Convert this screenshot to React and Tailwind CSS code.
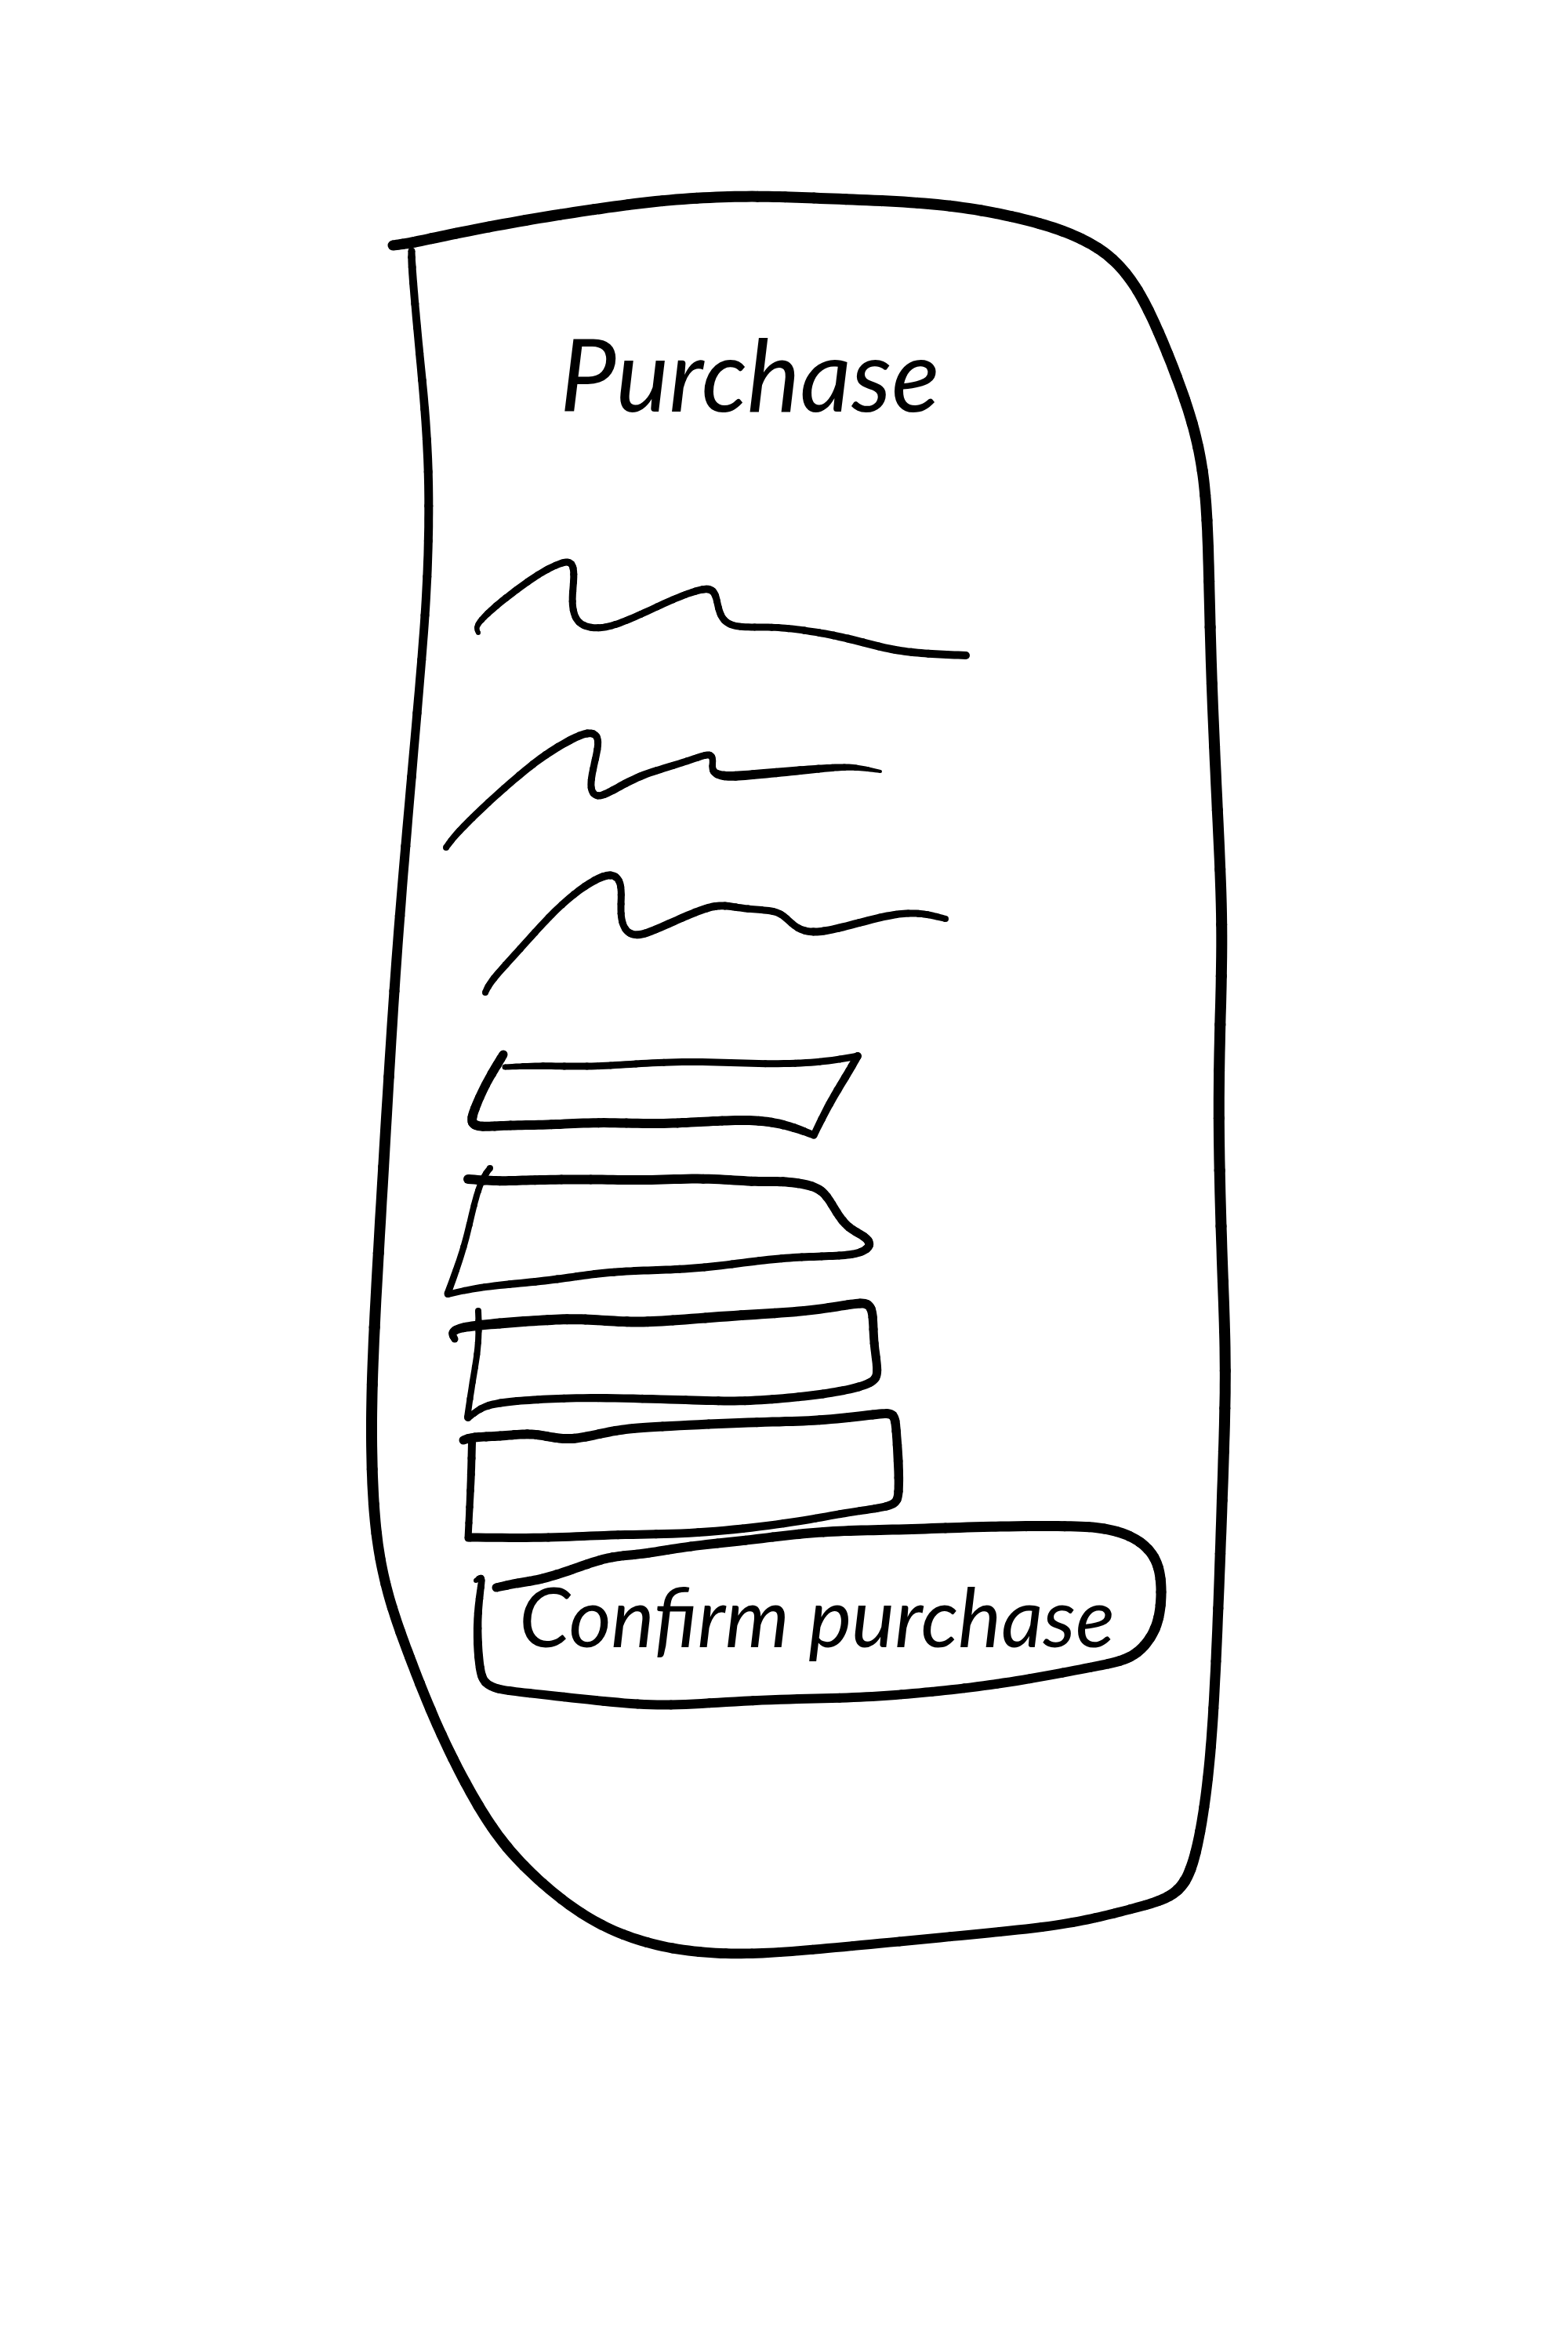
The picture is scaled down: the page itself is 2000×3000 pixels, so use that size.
import React from "react";

// Every pen stroke is a list of [x, y, width] points in sheet coordinates.
const FRAME = [
  [
    [501, 313, 13], [525, 310, 14], [573, 299, 14], [673, 280, 14], [757, 267, 14], [845, 255, 14],
    [933, 250, 14], [1000, 251, 14], [1075, 254, 14], [1174, 258, 14], [1251, 267, 14], [1331, 285, 14],
    [1381, 304, 14], [1420, 328, 14], [1452, 368, 14], [1478, 423, 14], [1501, 480, 14], [1522, 540, 14],
    [1535, 600, 14], [1540, 663, 14], [1542, 730, 14], [1545, 866, 14], [1553, 1038, 14], [1560, 1182, 14],
    [1556, 1310, 14], [1554, 1421, 14], [1557, 1564, 14], [1563, 1708, 14], [1563, 1790, 14], [1559, 1910, 14],
    [1554, 2053, 13], [1548, 2187, 13], [1541, 2271, 13], [1531, 2340, 13], [1519, 2388, 14], [1504, 2412, 14],
    [1480, 2425, 13], [1443, 2435, 12], [1400, 2446, 12], [1340, 2458, 12], [1213, 2470, 12], [1080, 2483, 12],
    [990, 2491, 12], [927, 2493, 13], [857, 2487, 13], [793, 2469, 13], [741, 2442, 13], [691, 2403, 13],
    [645, 2357, 14], [610, 2305, 14], [577, 2243, 13], [549, 2182, 13], [522, 2113, 13], [499, 2050, 13],
    [484, 1990, 13], [476, 1923, 14], [473, 1827, 14], [476, 1710, 14], [489, 1492, 14], [503, 1253, 13],
    [517, 1081, 12], [533, 899, 11], [543, 780, 11], [547, 690, 11], [547, 600, 11], [542, 520, 11],
    [535, 450, 10], [529, 385, 10], [525, 335, 10], [525, 320, 9],
  ],
];

const LINE_ONE = [
  [
    [610, 807, 6], [607, 801, 6], [612, 792, 8], [632, 773, 9], [659, 752, 9], [687, 732, 9], [710, 720, 9],
    [726, 715, 9], [732, 723, 9], [732, 741, 9], [729, 768, 9], [733, 789, 9], [744, 799, 9], [763, 802, 9],
    [783, 798, 9], [815, 785, 9], [861, 763, 9], [889, 753, 9], [905, 750, 10], [913, 757, 9], [916, 776, 9],
    [922, 792, 9], [939, 801, 9], [985, 799, 9], [1027, 804, 9], [1063, 810, 10], [1100, 819, 10],
    [1141, 830, 10], [1183, 834, 10], [1232, 836, 10],
  ],
];

const LINE_TWO = [
  [
    [569, 1081, 8], [581, 1064, 9], [623, 1023, 9], [664, 987, 9], [696, 962, 10], [728, 943, 10],
    [751, 933, 10], [763, 938, 9], [763, 954, 9], [756, 982, 9], [752, 1007, 9], [761, 1018, 9],
    [779, 1010, 10], [815, 989, 10], [861, 976, 9], [893, 965, 9], [907, 961, 9], [910, 970, 8],
    [907, 984, 9], [921, 991, 12], [953, 989, 12], [1027, 982, 11], [1063, 979, 9], [1091, 978, 8], [1123, 984, 4],
  ],
];

const LINE_THREE = [
  [
    [619, 1266, 8], [625, 1252, 9], [664, 1210, 9], [701, 1168, 9], [733, 1139, 9], [760, 1121, 10],
    [780, 1114, 10], [791, 1122, 9], [793, 1140, 9], [791, 1166, 9], [796, 1187, 9], [811, 1195, 10],
    [834, 1187, 10], [871, 1170, 10], [903, 1157, 10], [923, 1154, 10], [953, 1160, 9], [990, 1161, 9],
    [1003, 1171, 9], [1017, 1185, 9], [1036, 1190, 10], [1064, 1186, 10], [1128, 1168, 10], [1160, 1164, 9],
    [1183, 1166, 9], [1206, 1172, 8],
  ],
];

const BOX_ONE = [
  [
    [642, 1345, 11], [636, 1355, 12], [619, 1383, 11], [604, 1417, 12], [600, 1433, 12], [612, 1438, 12],
    [648, 1435, 12], [703, 1435, 12], [760, 1431, 12], [838, 1434, 12], [891, 1431, 12], [952, 1428, 12],
    [985, 1431, 12], [1013, 1438, 11], [1038, 1448, 9],
  ],
  [[1038, 1448, 9], [1058, 1407, 10], [1079, 1373, 10], [1094, 1347, 10]],
  [
    [644, 1361, 7], [691, 1359, 9], [748, 1361, 9], [809, 1357, 9], [883, 1353, 9], [981, 1358, 9],
    [1050, 1355, 9], [1094, 1347, 9],
  ],
];

const BOX_TWO = [
  [
    [597, 1504, 12], [638, 1507, 12], [675, 1505, 12], [756, 1504, 12], [822, 1506, 12], [899, 1502, 12],
    [964, 1508, 12], [997, 1506, 12], [1040, 1512, 12], [1055, 1525, 11], [1067, 1547, 11], [1082, 1567, 11],
    [1104, 1577, 11], [1112, 1588, 11], [1100, 1598, 10], [1075, 1602, 10], [1022, 1603, 10], [973, 1607, 10],
    [895, 1618, 10], [838, 1620, 10], [781, 1622, 10], [736, 1628, 10], [687, 1635, 10], [613, 1641, 9], [571, 1651, 8],
  ],
  [[571, 1650, 9], [593, 1590, 8], [605, 1533, 8], [615, 1503, 8], [625, 1490, 8]],
];

const BOX_THREE = [
  [
    [580, 1708, 9], [575, 1700, 10], [585, 1693, 12], [634, 1688, 13], [703, 1683, 13], [744, 1682, 13],
    [801, 1687, 13], [850, 1685, 13], [948, 1677, 13], [1030, 1673, 12], [1087, 1663, 12], [1109, 1661, 12],
    [1114, 1677, 11], [1114, 1713, 11], [1121, 1752, 11], [1114, 1764, 11], [1079, 1774, 11], [1022, 1782, 11],
    [948, 1788, 11], [887, 1786, 11], [752, 1782, 10], [683, 1785, 10], [634, 1789, 10], [612, 1796, 9], [597, 1809, 8],
  ],
  [[596, 1808, 8], [603, 1760, 8], [609, 1727, 8], [611, 1697, 8], [610, 1672, 8]],
];

const BOX_FOUR = [
  [
    [591, 1837, 11], [601, 1833, 12], [638, 1832, 12], [675, 1828, 12], [697, 1832, 12], [720, 1836, 12],
    [744, 1834, 12], [785, 1824, 12], [826, 1820, 12], [981, 1813, 12], [1042, 1813, 12], [1124, 1803, 12],
    [1141, 1802, 12], [1143, 1822, 11], [1146, 1863, 12], [1147, 1908, 11], [1142, 1919, 11], [1120, 1924, 10],
    [1075, 1930, 10], [1009, 1943, 10], [887, 1957, 11], [785, 1957, 11], [703, 1962, 11], [599, 1961, 11],
  ],
  [[597, 1962, 9], [599, 1923, 9], [601, 1880, 10], [602, 1840, 10]],
];

const PILL = [
  [
    [633, 2025, 11], [660, 2019, 12], [690, 2015, 12], [730, 2002, 12], [768, 1988, 12], [795, 1984, 12],
    [823, 1982, 12], [878, 1972, 12], [952, 1965, 12], [1020, 1956, 12], [1080, 1952, 13], [1163, 1951, 13],
    [1247, 1947, 13], [1373, 1946, 13], [1409, 1949, 13], [1442, 1958, 13], [1466, 1975, 13], [1479, 1998, 13],
    [1482, 2030, 13], [1479, 2065, 13], [1468, 2090, 13], [1451, 2109, 13], [1430, 2119, 13], [1400, 2125, 12],
    [1313, 2142, 12], [1230, 2154, 12], [1147, 2162, 12], [1080, 2166, 12], [958, 2168, 12], [850, 2177, 12],
    [777, 2171, 12], [660, 2158, 11], [635, 2155, 11], [617, 2147, 11], [612, 2130, 11], [609, 2097, 11],
    [609, 2057, 10], [614, 2020, 9], [615, 2010, 8], [607, 2016, 6],
  ],
];

const STEPS = 10;

// Runs a B-spline along the points, varying the width like pen pressure.
function sample(points) {
  const n = points.length;
  const mirror = (a, b) => a.map((v, k) => 2 * v - b[k]);
  const all = [mirror(points[0], points[1]), ...points, mirror(points[n - 1], points[n - 2])];
  const result = [];
  for (let i = 0; i < n - 1; i++) {
    for (let s = 0; s < STEPS; s++) {
      const t = s / STEPS;
      const weights = [
        (1 - t) ** 3 / 6,
        (3 * t ** 3 - 6 * t ** 2 + 4) / 6,
        (-3 * t ** 3 + 3 * t ** 2 + 3 * t + 1) / 6,
        t ** 3 / 6,
      ];
      result.push([0, 1, 2].map((k) => weights.reduce((sum, w, j) => sum + w * all[i + j][k], 0)));
    }
  }
  result.push(points[n - 1]);
  return result;
}

function outline(samples) {
  const left = [];
  const right = [];
  samples.forEach(([x, y, w], i) => {
    const a = samples[Math.max(i - 1, 0)];
    const b = samples[Math.min(i + 1, samples.length - 1)];
    const d = Math.hypot(b[0] - a[0], b[1] - a[1]) || 1;
    const nx = ((a[1] - b[1]) / d) * (w / 2);
    const ny = ((b[0] - a[0]) / d) * (w / 2);
    left.push(`${(x + nx).toFixed(1)} ${(y + ny).toFixed(1)}`);
    right.unshift(`${(x - nx).toFixed(1)} ${(y - ny).toFixed(1)}`);
  });
  return `M${left.concat(right).join("L")}Z`;
}

function Stroke({ points }) {
  const samples = sample(points);
  const joints = samples.filter((_, i) => i % (STEPS / 2) === 0);
  return (
    <g>
      <path d={outline(samples)} />
      {joints.map(([x, y, w], i) => (
        <circle key={i} cx={x} cy={y} r={w / 2} />
      ))}
    </g>
  );
}

function Ink({ strokes, viewBox, className }) {
  return (
    <svg viewBox={viewBox} preserveAspectRatio="none" aria-hidden="true" className={`pointer-events-none overflow-visible fill-black ${className}`}>
      {strokes.map((points, i) => (
        <Stroke key={i} points={points} />
      ))}
    </svg>
  );
}

function Field({ label, strokes, viewBox, className }) {
  return (
    <div className={`relative w-[65%] ${className}`}>
      <input type="text" aria-label={label} className="size-full bg-transparent px-14 text-5xl outline-none" />
      <Ink strokes={strokes} viewBox={viewBox} className="absolute inset-0 size-full" />
    </div>
  );
}

export default function App() {
  return (
    <main className="min-h-screen bg-white pt-[244px] pb-24 pl-9 font-['Lato',sans-serif] text-black italic">
      <section className="relative mx-auto w-full max-w-[1104px] pt-[144px] pr-[84px] pb-[316px] pl-[100px]">
        <Ink strokes={FRAME} viewBox="466 244 1104 2254" className="absolute inset-0 size-full" />

        <h1 className="pl-[148px] text-[128px] leading-[176px]">Purchase</h1>

        <div className="pt-[140px]">
          <Ink strokes={LINE_ONE} viewBox="566 704 920 160" className="block w-full" />
          <Ink strokes={LINE_TWO} viewBox="566 930 920 160" className="mt-[66px] block w-full" />
          <Ink strokes={LINE_THREE} viewBox="566 1112 920 160" className="mt-[22px] block w-full" />
        </div>

        <form className="flex flex-col items-start pt-[66px]" onSubmit={(event) => event.preventDefault()}>
          <Field label="Field 1" strokes={BOX_ONE} viewBox="566 1338 598 116" className="h-[116px]" />
          <Field label="Field 2" strokes={BOX_TWO} viewBox="566 1486 598 170" className="mt-8 h-[170px]" />
          <Field label="Field 3" strokes={BOX_THREE} viewBox="566 1660 598 136" className="mt-1 h-[136px]" />
          <Field label="Field 4" strokes={BOX_FOUR} viewBox="566 1796 598 144" className="h-36" />
          <div className="w-full pl-8">
            <button type="submit" className="relative flex h-[242px] w-full cursor-pointer items-center justify-center text-[104px] leading-none whitespace-nowrap italic">
              <Ink strokes={PILL} viewBox="598 1940 888 242" className="absolute inset-0 size-full" />
              Confirm purchase
            </button>
          </div>
        </form>
      </section>
    </main>
  );
}
